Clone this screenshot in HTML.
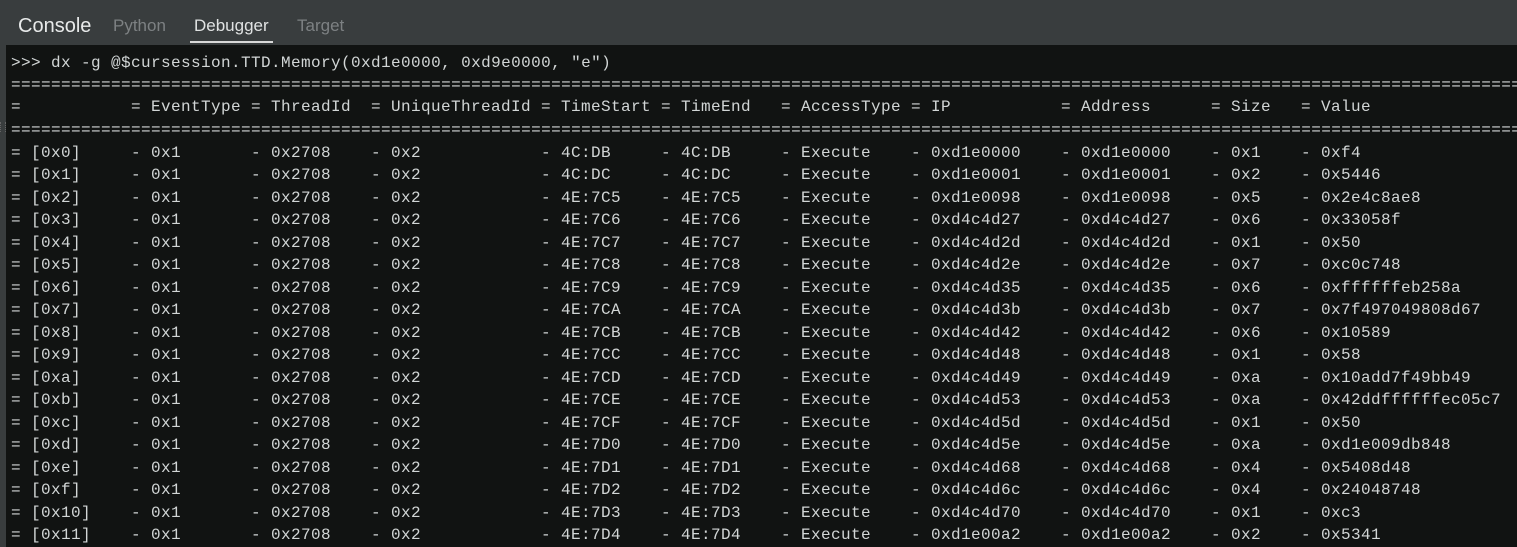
<!DOCTYPE html><html><head><style>
body{margin:0;width:1517px;height:547px;background:#393d3e;overflow:hidden;font-family:"Liberation Sans",sans-serif;position:relative}
.tab{position:absolute;top:16px;font-size:17px;color:#7d8183}
#panel{position:absolute;left:6px;top:45px;right:0;bottom:0;background:#111312;overflow:hidden}
.ln{position:absolute;left:5px;white-space:pre;font-family:"Liberation Mono",monospace;font-size:16px;letter-spacing:0.4px;color:#d2d6d6;height:22px;line-height:22px}
.ln span{display:inline-block;white-space:pre}
.a,.b,.c,.e,.f{width:120px}.d{width:170px}.g{width:130px}.h,.i{width:150px}.j{width:90px}
</style></head><body>
<div class="tab" style="left:18px;top:15px;font-size:20px;color:#e8eaea">Console</div>
<div class="tab" style="left:113px">Python</div>
<div class="tab" style="left:194px;color:#e0e2e2">Debugger</div>
<div style="position:absolute;left:190px;top:41px;width:83px;height:2px;background:#d8d8d8"></div>
<div class="tab" style="left:297px">Target</div>
<div style="position:absolute;left:0;top:122px;width:4px;height:10px;border-left:1px dotted #666;border-right:1px dotted #666"></div>
<div id="panel">
<div class="ln" style="top:7px">&gt;&gt;&gt; dx -g @$cursession.TTD.Memory(0xd1e0000, 0xd9e0000, "e")</div>
<div class="ln" style="top:29px">==============================================================================================================================================================</div>
<div class="ln" style="top:51px"><span class="a">=</span><span class="b">= EventType</span><span class="c">= ThreadId</span><span class="d">= UniqueThreadId</span><span class="e">= TimeStart</span><span class="f">= TimeEnd</span><span class="g">= AccessType</span><span class="h">= IP</span><span class="i">= Address</span><span class="j">= Size</span><span>= Value</span></div>
<div class="ln" style="top:74px">==============================================================================================================================================================</div>
<div id="rows"></div>
</div>
<script>
var d=[["0x0","4C:DB","0xd1e0000","0x1","0xf4"],["0x1","4C:DC","0xd1e0001","0x2","0x5446"],["0x2","4E:7C5","0xd1e0098","0x5","0x2e4c8ae8"],["0x3","4E:7C6","0xd4c4d27","0x6","0x33058f"],["0x4","4E:7C7","0xd4c4d2d","0x1","0x50"],["0x5","4E:7C8","0xd4c4d2e","0x7","0xc0c748"],["0x6","4E:7C9","0xd4c4d35","0x6","0xffffffeb258a"],["0x7","4E:7CA","0xd4c4d3b","0x7","0x7f497049808d67"],["0x8","4E:7CB","0xd4c4d42","0x6","0x10589"],["0x9","4E:7CC","0xd4c4d48","0x1","0x58"],["0xa","4E:7CD","0xd4c4d49","0xa","0x10add7f49bb49"],["0xb","4E:7CE","0xd4c4d53","0xa","0x42ddffffffec05c7"],["0xc","4E:7CF","0xd4c4d5d","0x1","0x50"],["0xd","4E:7D0","0xd4c4d5e","0xa","0xd1e009db848"],["0xe","4E:7D1","0xd4c4d68","0x4","0x5408d48"],["0xf","4E:7D2","0xd4c4d6c","0x4","0x24048748"],["0x10","4E:7D3","0xd4c4d70","0x1","0xc3"],["0x11","4E:7D4","0xd1e00a2","0x2","0x5341"]];
var h="";d.forEach(function(r,i){h+='<div class="ln" style="top:'+(96.5+i*22.5)+'px"><span class="a">= ['+r[0]+']</span><span class="b">- 0x1</span><span class="c">- 0x2708</span><span class="d">- 0x2</span><span class="e">- '+r[1]+'</span><span class="f">- '+r[1]+'</span><span class="g">- Execute</span><span class="h">- '+r[2]+'</span><span class="i">- '+r[2]+'</span><span class="j">- '+r[3]+'</span><span>- '+r[4]+'</span></div>'});
document.getElementById("rows").outerHTML=h;
</script>
</body></html>
